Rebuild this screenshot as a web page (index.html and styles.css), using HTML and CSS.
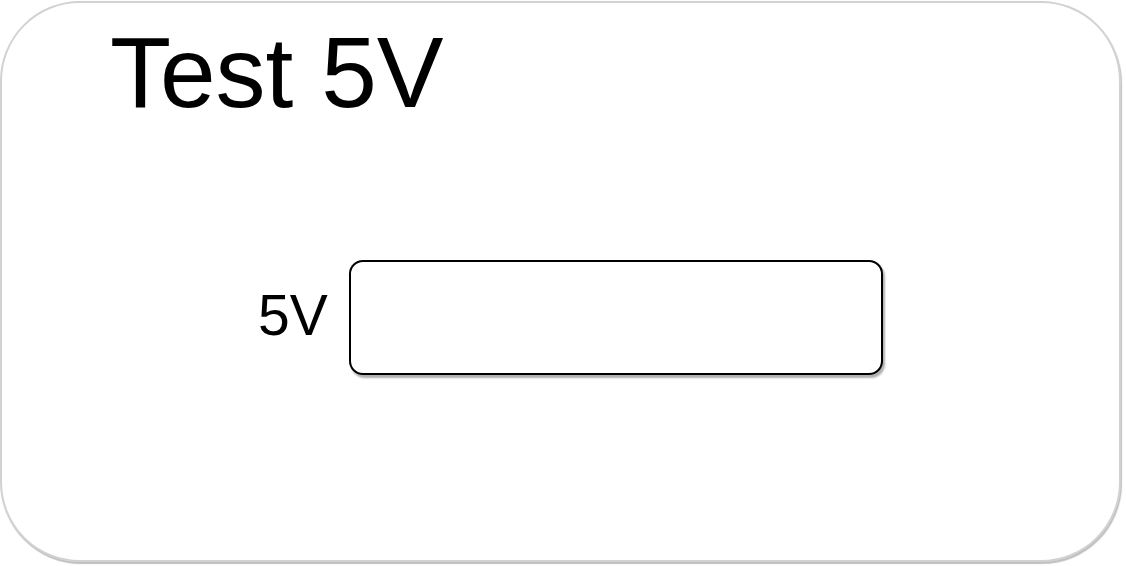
FILE: index.html
```html
<!DOCTYPE html>
<html>
<head>
<meta charset="utf-8">
<link rel="stylesheet" href="styles.css">
</head>
<body>
<div class="card">
  <h1 class="title">Test 5V</h1>
  <div class="row">
    <span class="label">5V</span>
    <div class="field"></div>
  </div>
</div>
</body>
</html>
```
FILE: styles.css
```css
html, body {
  margin: 0;
  padding: 0;
  background: #ffffff;
}
body {
  width: 1126px;
  height: 566px;
  overflow: hidden;
  font-family: "Liberation Sans", Arial, sans-serif;
  color: #000;
}
.card {
  box-sizing: border-box;
  margin: 1px 0 0 0;
  width: 1121px;
  height: 561px;
  border: 2px solid #d2d2d2;
  border-radius: 80px;
  box-shadow: 1px 2px 1px #c0c0c0;
  background: #fff;
  display: flex;
  flex-direction: column;
}
.title {
  margin: 19px 0 0 108px;
  font-weight: normal;
  font-size: 100px;
  line-height: 100px;
}
.row {
  display: flex;
  align-items: center;
  gap: 21px;
  margin-top: 138px;
  padding-left: 256px;
}
.label {
  font-size: 57px;
  line-height: 60px;
  margin-bottom: 5px;
}
.field {
  box-sizing: border-box;
  width: 534px;
  height: 115px;
  border: 2px solid #000;
  border-radius: 14px;
  box-shadow: 2px 3px 2px #b0b0b0;
  background: #fff;
}
```
